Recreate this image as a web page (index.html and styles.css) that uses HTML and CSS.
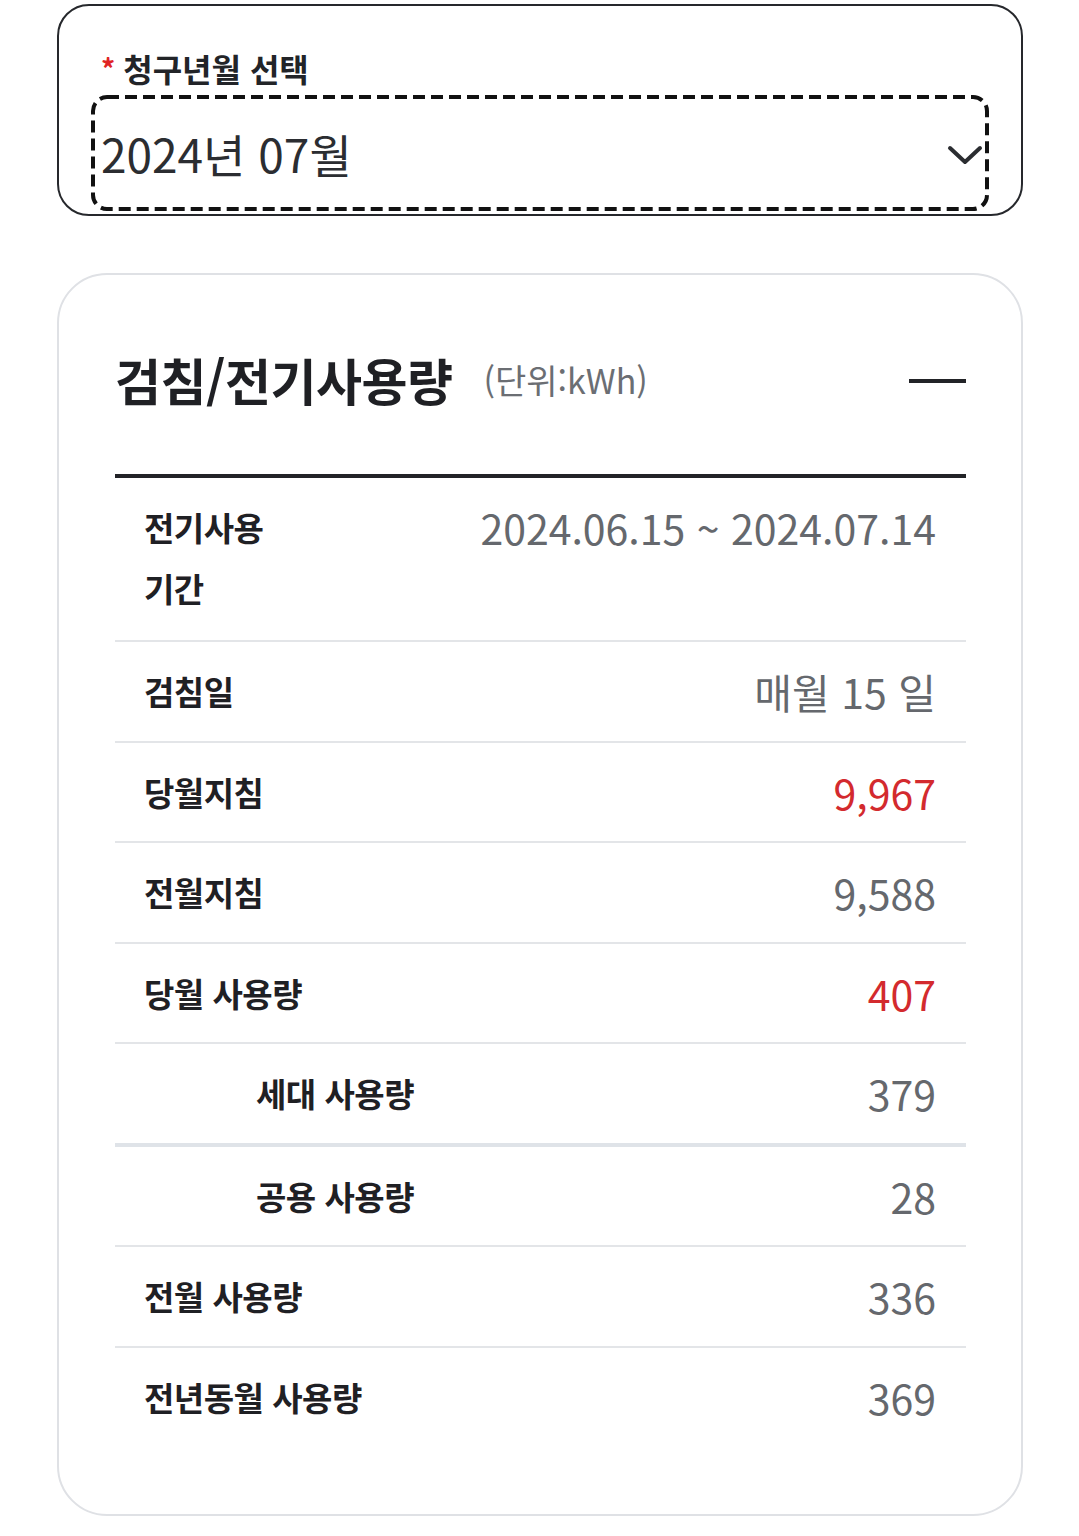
FILE: index.html
```html
<!DOCTYPE html>
<html lang="ko">
<head>
<meta charset="utf-8">
<link rel="stylesheet" href="styles.css">
</head>
<body>
<div class="page">
  <section class="select-box">
    <div class="select-label"><span class="req">*</span>청구년월 선택</div>
    <div class="select-field">
      <svg class="dash" width="898" height="116" viewBox="0 0 898 116"><rect x="2" y="2" width="894" height="112" rx="14" ry="14" fill="none" stroke="#111" stroke-width="4" stroke-dasharray="12 6"/></svg>
      <span class="select-value">2024년 07월</span>
      <svg class="chevron" width="36" height="22" viewBox="0 0 36 22"><path d="M3 4 L18 18 L33 4" fill="none" stroke="#2b2d31" stroke-width="4" stroke-linecap="round" stroke-linejoin="round"/></svg>
    </div>
  </section>

  <section class="card">
    <div class="card-head">
      <h2 class="card-title">검침/전기사용량</h2>
      <span class="unit">(단위:kWh)</span>
      <span class="collapse"></span>
    </div>
    <div class="rows">
      <div class="row first"><div class="label">전기사용<br>기간</div><div class="value">2024.06.15 ~ 2024.07.14</div></div>
      <div class="row"><div class="label">검침일</div><div class="value">매월 15 일</div></div>
      <div class="row"><div class="label">당월지침</div><div class="value red">9,967</div></div>
      <div class="row"><div class="label">전월지침</div><div class="value">9,588</div></div>
      <div class="row"><div class="label">당월 사용량</div><div class="value red">407</div></div>
      <div class="row sub thick"><div class="label">세대 사용량</div><div class="value">379</div></div>
      <div class="row sub"><div class="label">공용 사용량</div><div class="value">28</div></div>
      <div class="row"><div class="label">전월 사용량</div><div class="value">336</div></div>
      <div class="row last"><div class="label">전년동월 사용량</div><div class="value">369</div></div>
    </div>
  </section>
</div>
</body>
</html>
```
FILE: styles.css
```css
* { box-sizing: border-box; }
html, body { margin: 0; padding: 0; background: #fff; }
body {
  font-family: "Noto Sans CJK KR", "Noto Sans", sans-serif;
  color: #1f2024;
}
.page {
  width: 1079px;
  padding: 4px 56px 0 57px;
}
.select-box {
  border: 2px solid #26282c;
  border-radius: 32px;
  height: 212px;
  padding: 40px 32px 2px 32px;
  display: flex;
  flex-direction: column;
}
.select-label {
  font-size: 32px;
  font-weight: 700;
  line-height: 44px;
  padding-left: 10px;
  color: #222428;
}
.req {
  color: #e02424;
  font-size: 28px;
  margin-right: 8px;
  vertical-align: 2px;
}
.select-field {
  position: relative;
  margin-top: 5px;
  height: 116px;
  display: flex;
  align-items: center;
  justify-content: space-between;
  padding: 0 6px 0 10px;
}
.dash {
  position: absolute;
  left: 0;
  top: 0;
}
.select-value {
  font-size: 46px;
  font-weight: 400;
  color: #2b2d31;
  position: relative;
}
.chevron { display: block; margin-top: 4px; position: relative; }

.card {
  margin-top: 57px;
  border: 2px solid #dfe1e5;
  border-radius: 50px;
  height: 1243px;
  padding: 0 55px 0 56px;
}
.card-head {
  display: flex;
  align-items: center;
  padding: 74px 0 65px;
  height: 199px;
}
.card-title {
  margin: 0;
  font-size: 50px;
  font-weight: 700;
  line-height: 60px;
  letter-spacing: -0.5px;
  color: #1f2024;
}
.unit {
  margin-left: 31px;
  font-size: 34px;
  color: #6b6e73;
}
.collapse {
  margin-left: auto;
  width: 57px;
  height: 4px;
  margin-top: 4px;
  background: #222327;
}
.rows {
  border-top: 4px solid #222327;
}
.row {
  display: flex;
  justify-content: space-between;
  align-items: flex-start;
  padding: 19px 30px 18.5px 29px;
  border-bottom: 2px solid #e3e5e8;
  line-height: 61px;
}
.row.first { padding-bottom: 21px; }
.row.thick { border-bottom: 4px solid #dfe3e8; }
.row.last { border-bottom: none; }
.label {
  font-size: 33px;
  font-weight: 700;
  letter-spacing: -0.5px;
  color: #1f2024;
}
.sub .label { padding-left: 112px; }
.value {
  font-size: 41px;
  font-weight: 400;
  color: #65686d;
}
.value.red { color: #d32a2e; }
```
